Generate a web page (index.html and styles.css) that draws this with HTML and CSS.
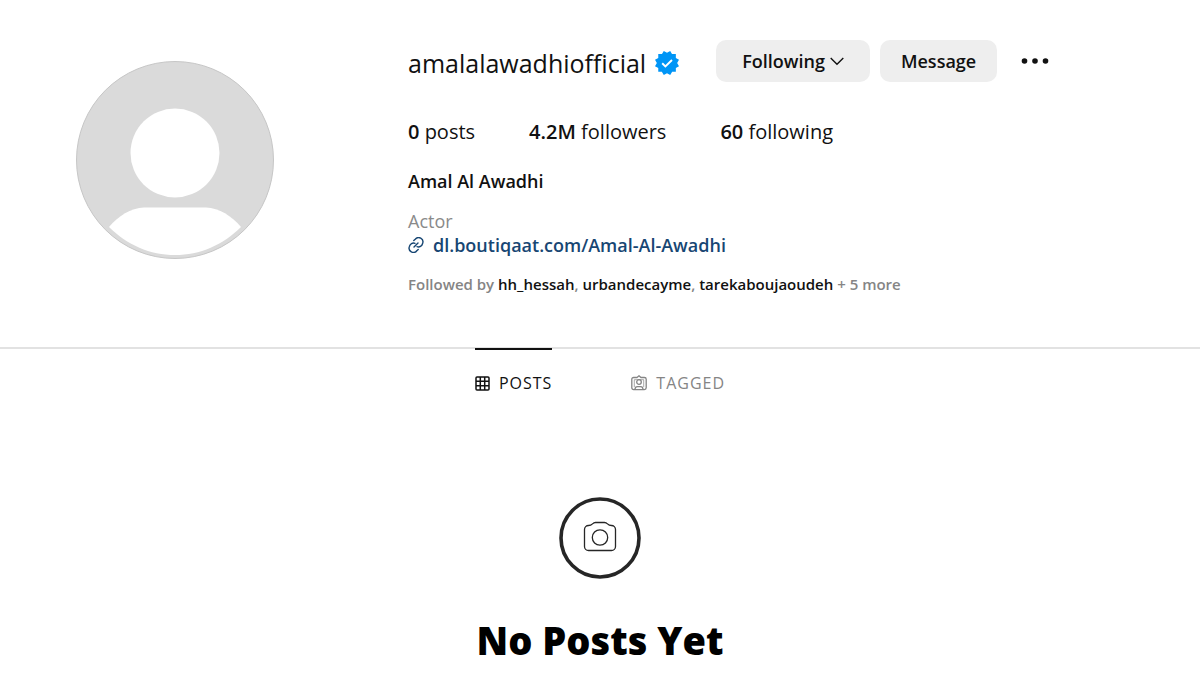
FILE: index.html
```html
<!DOCTYPE html>
<html lang="en">
<head>
<meta charset="utf-8">
<meta name="viewport" content="width=device-width, initial-scale=1">
<title>Amal Al Awadhi</title>
<link rel="stylesheet" href="styles.css">
</head>
<body>
<header class="profile">
  <div class="profile-photo">
    <svg class="avatar" viewBox="0 0 198 198" role="img" aria-label="Profile photo">
      <circle cx="99" cy="99" r="98.500" fill="#dadada" stroke="#c6c6c6"/>
      <circle cx="99" cy="92" r="44.500" fill="#fff"/>
      <path d="M33 166C42 155 55 147 68 146.500H130C143 147 156 155 165 166C147 184 124 194 99 194S51 184 33 166Z" fill="#fff"/>
    </svg>
  </div>
  <section class="info">
    <div class="title-row">
      <h1 class="username">amalalawadhiofficial</h1>
      <svg class="verified" viewBox="0 0 40 40" role="img" aria-label="Verified"><path d="M19.998 3.094 14.638 0l-2.972 5.150H5.432v6.354L0 14.640 3.094 20 0 25.359l5.432 3.137v5.905h5.975L14.638 40l5.360-3.094L25.358 40l3.232-5.600h6.162v-6.010L40 25.359 36.905 20 40 14.641l-5.248-3.030v-6.460h-6.419L25.358 0l-5.360 3.094Z" fill="#0095f6"/><path d="m12 20.500 5.300 5.300L28.300 15" fill="none" stroke="#fff" stroke-width="3.200"/></svg>
      <div class="actions">
        <button class="button following" type="button">Following
          <svg class="chevron" viewBox="0 0 14 9" aria-hidden="true"><path d="m.7 1 6.300 6.200L13.300 1" fill="none" stroke="currentColor" stroke-width="1.400"/></svg>
        </button>
        <button class="button" type="button">Message</button>
        <button class="more" type="button" aria-label="Options"><svg class="dots" viewBox="0 0 28 8" aria-hidden="true"><circle cx="3.500" cy="4" r="2.800"/><circle cx="14" cy="4" r="2.800"/><circle cx="24.500" cy="4" r="2.800"/></svg></button>
      </div>
    </div>
    <ul class="stats">
      <li><b>0</b> posts</li>
      <li><b>4.2M</b> followers</li>
      <li><b>60</b> following</li>
    </ul>
    <h2 class="name">Amal Al Awadhi</h2>
    <div class="category">Actor</div>
    <a class="website" href="#"><svg class="link-icon" viewBox="0 0 16 16" fill="none" stroke="currentColor" stroke-width="1.400" stroke-linecap="round" aria-hidden="true"><path d="M5.800 3.600 7.200 2.300A4.300 4.300 0 0 1 14.600 6.500C14 9 11.500 10.600 9 9.700M10.200 12.400 8.800 13.700A4.300 4.300 0 0 1 1.400 9.500C2 7 4.500 5.400 7 6.300M6 10l4-4"/></svg>dl.boutiqaat.com/Amal-Al-Awadhi</a>
    <p class="followed">Followed by <b>hh_hessah</b>, <b>urbandecayme</b>, <b>tarekaboujaoudeh</b> + 5 more</p>
  </section>
</header>
<nav class="tabs">
  <a class="tab active" href="#"><svg class="tab-icon" viewBox="0 0 15 15" fill="none" stroke="currentColor" stroke-width="1.500" aria-hidden="true"><rect x="1" y="1" width="13" height="13" rx="1"/><path d="M5.300 1v13M9.700 1v13M1 5.300h13M1 9.700h13"/></svg>POSTS</a>
  <a class="tab" href="#"><svg class="tab-icon tagged" viewBox="0 0 16 16" fill="none" stroke="currentColor" stroke-width="1.300" aria-hidden="true"><path d="M6 2.500 8 .8l2 1.700H13.400A1.800 1.800 0 0 1 15.200 4.300v8.500a1.800 1.800 0 0 1-1.800 1.800H2.600A1.800 1.800 0 0 1 .8 12.800V4.300A1.800 1.800 0 0 1 2.600 2.500Z"/><circle cx="8" cy="7" r="2.300"/><path d="M4 14.300c0-1.800.9-2.700 2.500-2.700h3c1.600 0 2.500.9 2.500 2.700"/><path d="M3.300 12V4.700h9.400V12" stroke-width=".7"/></svg>TAGGED</a>
</nav>
<main class="empty">
  <svg class="camera" viewBox="0 0 82 82" fill="none" aria-hidden="true"><circle cx="41" cy="41" r="39" stroke="#262626" stroke-width="3.600"/><g stroke="#262626" stroke-width="1.300"><path d="M29.500 28.500C34 28.500 33 25.500 36.500 25.500H45.500C49 25.500 48 28.500 52.500 28.500A4 4 0 0 1 56.500 32.500V49.500A4 4 0 0 1 52.500 53.500H29.500A4 4 0 0 1 25.500 49.500V32.500A4 4 0 0 1 29.500 28.500Z"/><circle cx="41" cy="40.500" r="7.700"/></g></svg>
  <h2 class="empty-title">No Posts Yet</h2>
</main>
</body>
</html>
```

FILE: styles.css
```css
* { box-sizing: border-box; }
body {
  margin: 0;
  background: #fff;
  color: #111;
  font-family: "Open Sans", "Noto Sans", sans-serif;
  font-size: 18px;
  line-height: 24px;
}
h1, h2, p, ul { margin: 0; padding: 0; }
b { font-weight: 600; }
svg { flex: none; }
a { color: inherit; text-decoration: none; }
button { border: 0; font: inherit; color: inherit; cursor: pointer; }
.profile {
  display: grid;
  grid-template-columns: 350px 1fr;
  column-gap: 58px;
  padding: 40px 24px 51px 0;
}
.profile-photo { display: flex; justify-content: center; align-items: flex-start; padding-top: 21px; }
.avatar { width: 198px; height: 198px; }
.title-row { display: flex; align-items: center; }
.username { font-size: 25px; font-weight: 400; line-height: 34px; padding-top: 4px; }
.verified { width: 24px; height: 24px; margin: 4px 37px 0 9px; }
.actions { display: flex; align-items: center; gap: 10px; }
.button {
  display: flex;
  align-items: center;
  height: 42px;
  padding: 0 21px;
  border-radius: 10px;
  background: #eee;
  font-size: 18px;
  font-weight: 600;
}
.following { gap: 5px; padding: 0 26px; }
.chevron { width: 14px; height: 9px; }
.more { display: flex; padding: 12px 14px; background: none; }
.dots { width: 28px; height: 8px; fill: #111; }
.stats { display: flex; gap: 54px; margin-top: 36px; list-style: none; font-size: 20px; line-height: 28px; }
.name { margin-top: 23px; font-size: 18px; font-weight: 600; line-height: 24px; }
.category { margin-top: 16px; color: #8a8a8a; }
.website { display: inline-flex; align-items: center; gap: 9px; color: #174673; font-weight: 600; }
.link-icon { width: 16px; height: 16px; }
.followed { margin-top: 14px; color: #858585; font-size: 15px; font-weight: 600; line-height: 24px; }
.followed b { color: #111; }
.tabs { display: flex; justify-content: center; gap: 79px; border-top: 2px solid #e2e2e2; }
.tab {
  display: flex;
  align-items: center;
  gap: 9px;
  margin-top: -1px;
  padding: 21px 0;
  border-top: 2px solid transparent;
  color: #858585;
  font-size: 16px;
  letter-spacing: 1px;
}
.active { border-top-color: #111; color: #111; }
.tab-icon { width: 15px; height: 15px; }
.tagged { width: 16px; height: 16px; }
.empty { display: flex; flex-direction: column; align-items: center; padding-top: 81px; }
.camera { width: 82px; height: 82px; }
.empty-title { margin-top: 35px; font-size: 38px; font-weight: 800; line-height: 52px; color: #000; }
```
